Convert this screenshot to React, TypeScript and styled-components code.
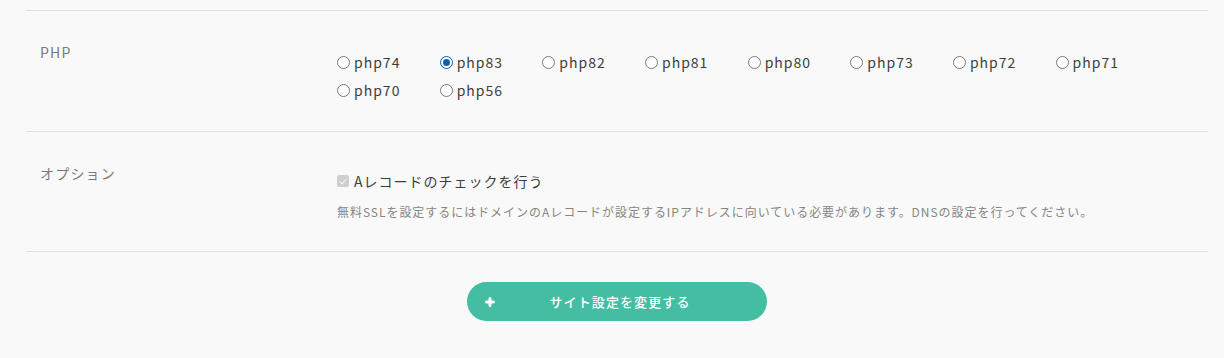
import React from "react";
import styled, { createGlobalStyle } from "styled-components";

const GlobalStyle = createGlobalStyle`
  html, body {
    margin: 0;
    padding: 0;
    background: #f9f9f9;
    font-family: "Noto Sans CJK JP", "Noto Sans", sans-serif;
  }
`;

const Page = styled.div`
  padding: 10px 16px 37px 26px;
  background: #f9f9f9;
`;

const List = styled.div`
  border-bottom: 1px solid #e1e1e1;
`;

const Row = styled.div`
  display: grid;
  grid-template-columns: 311px 1fr;
  border-top: 1px solid #e1e1e1;
`;

const Label = styled.div`
  padding: 31px 0 0 14px;
  font-size: 14px;
  line-height: 20px;
  letter-spacing: 1.2px;
  color: #7a7a7a;
`;

const Content = styled.div`
  padding: 37px 0 27px 0;
`;

const RadioGroup = styled.div`
  display: flex;
  flex-wrap: wrap;
`;

const RadioOption = styled.label`
  width: 102.67px;
  display: flex;
  align-items: center;
  height: 28px;
  font-size: 14px;
  letter-spacing: 1px;
  color: #3e3e3e;
`;

const Radio = styled.input.attrs({ type: "radio" })`
  appearance: none;
  -webkit-appearance: none;
  width: 13px;
  height: 13px;
  margin: 0 4px 0 0;
  border-radius: 50%;
  border: 1px solid #7a7a7a;
  background: #fff;
  box-sizing: border-box;
  display: grid;
  place-items: center;
  &:checked {
    border-color: #0f5fae;
  }
  &:checked::after {
    content: "";
    width: 7px;
    height: 7px;
    border-radius: 50%;
    background: #0f5fae;
  }
`;

const CheckLine = styled.label`
  display: flex;
  align-items: center;
  height: 24px;
  font-size: 14px;
  letter-spacing: 1px;
  color: #3e3e3e;
`;

const Check = styled.input.attrs({ type: "checkbox" })`
  appearance: none;
  -webkit-appearance: none;
  width: 12px;
  height: 12px;
  margin: 0 5px 0 0;
  border-radius: 2px;
  background: #cfcfcf;
  position: relative;
  &::after {
    content: "";
    position: absolute;
    left: 4px;
    top: 1.5px;
    width: 3px;
    height: 6px;
    border: solid #f4f4f4;
    border-width: 0 1.5px 1.5px 0;
    transform: rotate(40deg);
  }
`;

const Note = styled.p`
  margin: 7px 0 0 0;
  font-size: 12px;
  line-height: 24px;
  letter-spacing: 0.96px;
  color: #858585;
`;

const ButtonBar = styled.div`
  display: flex;
  justify-content: center;
  padding-top: 30px;
`;

const SubmitButton = styled.button`
  width: 300px;
  height: 39px;
  border: none;
  border-radius: 20px;
  background: #43bea3;
  color: #fff;
  display: flex;
  align-items: center;
  padding: 0 22px 0 18px;
  font-family: inherit;
  font-size: 13px;
  font-weight: 500;
  letter-spacing: 1.1px;
  cursor: pointer;
`;

const ButtonText = styled.span`
  flex: 1;
  text-align: center;
`;

const PlusIcon = () => (
  <svg width="10" height="10" viewBox="0 0 10 10" aria-hidden="true">
    <path d="M5 1.5 V8.5 M1.5 5 H8.5" stroke="#fff" strokeWidth="3" strokeLinecap="round" fill="none" />
  </svg>
);

const versions = ["php74", "php83", "php82", "php81", "php80", "php73", "php72", "php71", "php70", "php56"];

export default function App() {
  const [php, setPhp] = React.useState("php83");
  return (
    <>
      <GlobalStyle />
      <Page>
        <List>
          <Row>
            <Label>PHP</Label>
            <Content>
              <RadioGroup>
                {versions.map((v) => (
                  <RadioOption key={v}>
                    <Radio name="php" value={v} checked={php === v} onChange={() => setPhp(v)} />
                    {v}
                  </RadioOption>
                ))}
              </RadioGroup>
            </Content>
          </Row>
          <Row>
            <Label>オプション</Label>
            <Content>
              <CheckLine>
                <Check checked disabled readOnly />
                Aレコードのチェックを行う
              </CheckLine>
              <Note>
                無料SSLを設定するにはドメインのAレコードが設定するIPアドレスに向いている必要があります。DNSの設定を行ってください。
              </Note>
            </Content>
          </Row>
        </List>
        <ButtonBar>
          <SubmitButton type="button">
            <PlusIcon />
            <ButtonText>サイト設定を変更する</ButtonText>
          </SubmitButton>
        </ButtonBar>
      </Page>
    </>
  );
}
